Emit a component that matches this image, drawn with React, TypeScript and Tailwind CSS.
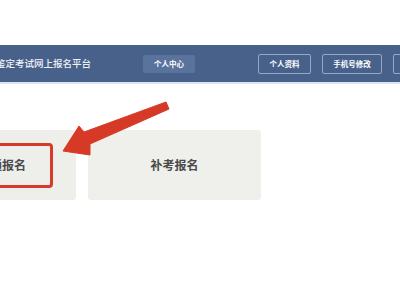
export default function App() {
  const font = { fontFamily: '"Noto Sans CJK SC", "Noto Sans", sans-serif' };
  return (
    <div className="relative w-[400px] h-[300px] overflow-hidden bg-white" style={font}>
      <div className="h-[45px]" />
      <header className="flex items-center h-[37px] bg-[#48618a] text-white">
        <span className="ml-[-4px] text-[9.5px] font-medium leading-none whitespace-nowrap text-[#eef2f8]">鉴定考试网上报名平台</span>
        <button className="ml-[52px] w-[52px] h-[18px] shrink-0 rounded-[2px] bg-[#5a739c] text-[7.5px] font-bold leading-none">个人中心</button>
        <button className="ml-[63px] w-[53px] h-[20px] shrink-0 rounded-[2px] border border-[#95a8c6] text-[7.5px] font-bold leading-none">个人资料</button>
        <button className="ml-[11px] w-[60px] h-[20px] shrink-0 rounded-[2px] border border-[#95a8c6] text-[7.5px] font-bold leading-none">手机号修改</button>
        <button className="ml-[11px] w-[50px] h-[20px] shrink-0 rounded-[2px] border border-[#95a8c6] text-[7.5px] font-bold leading-none">退出登录</button>
      </header>
      <div className="h-[2px] bg-[#dfe5ee]" />
      <div className="flex gap-[12px] mt-[46px] ml-[-72px]">
        <div className="flex items-center justify-center w-[148px] h-[70px] shrink-0 rounded-[3px] bg-[#eeeeea]">
          <div className="flex items-center justify-center w-[102px] h-[45px] rounded-[4px] border-[3px] border-[#d8392a]">
            <span className="text-[12px] font-semibold text-[#4a4a4a] leading-none">普通报名</span>
          </div>
        </div>
        <div className="flex items-center justify-center w-[173px] h-[70px] shrink-0 rounded-[3px] bg-[#efefeb]">
          <span className="text-[12px] font-semibold text-[#4a4a4a] leading-none">补考报名</span>
        </div>
      </div>
      <svg className="absolute left-0 top-0 pointer-events-none" width="400" height="300" viewBox="0 0 400 300">
        <polygon
          points="63,151 79,126 84,132 166,102 169,109 90,144 90,155"
          fill="#d63a26"
          stroke="#d63a26"
          strokeWidth="1"
          strokeLinejoin="round"
        />
      </svg>
    </div>
  );
}
